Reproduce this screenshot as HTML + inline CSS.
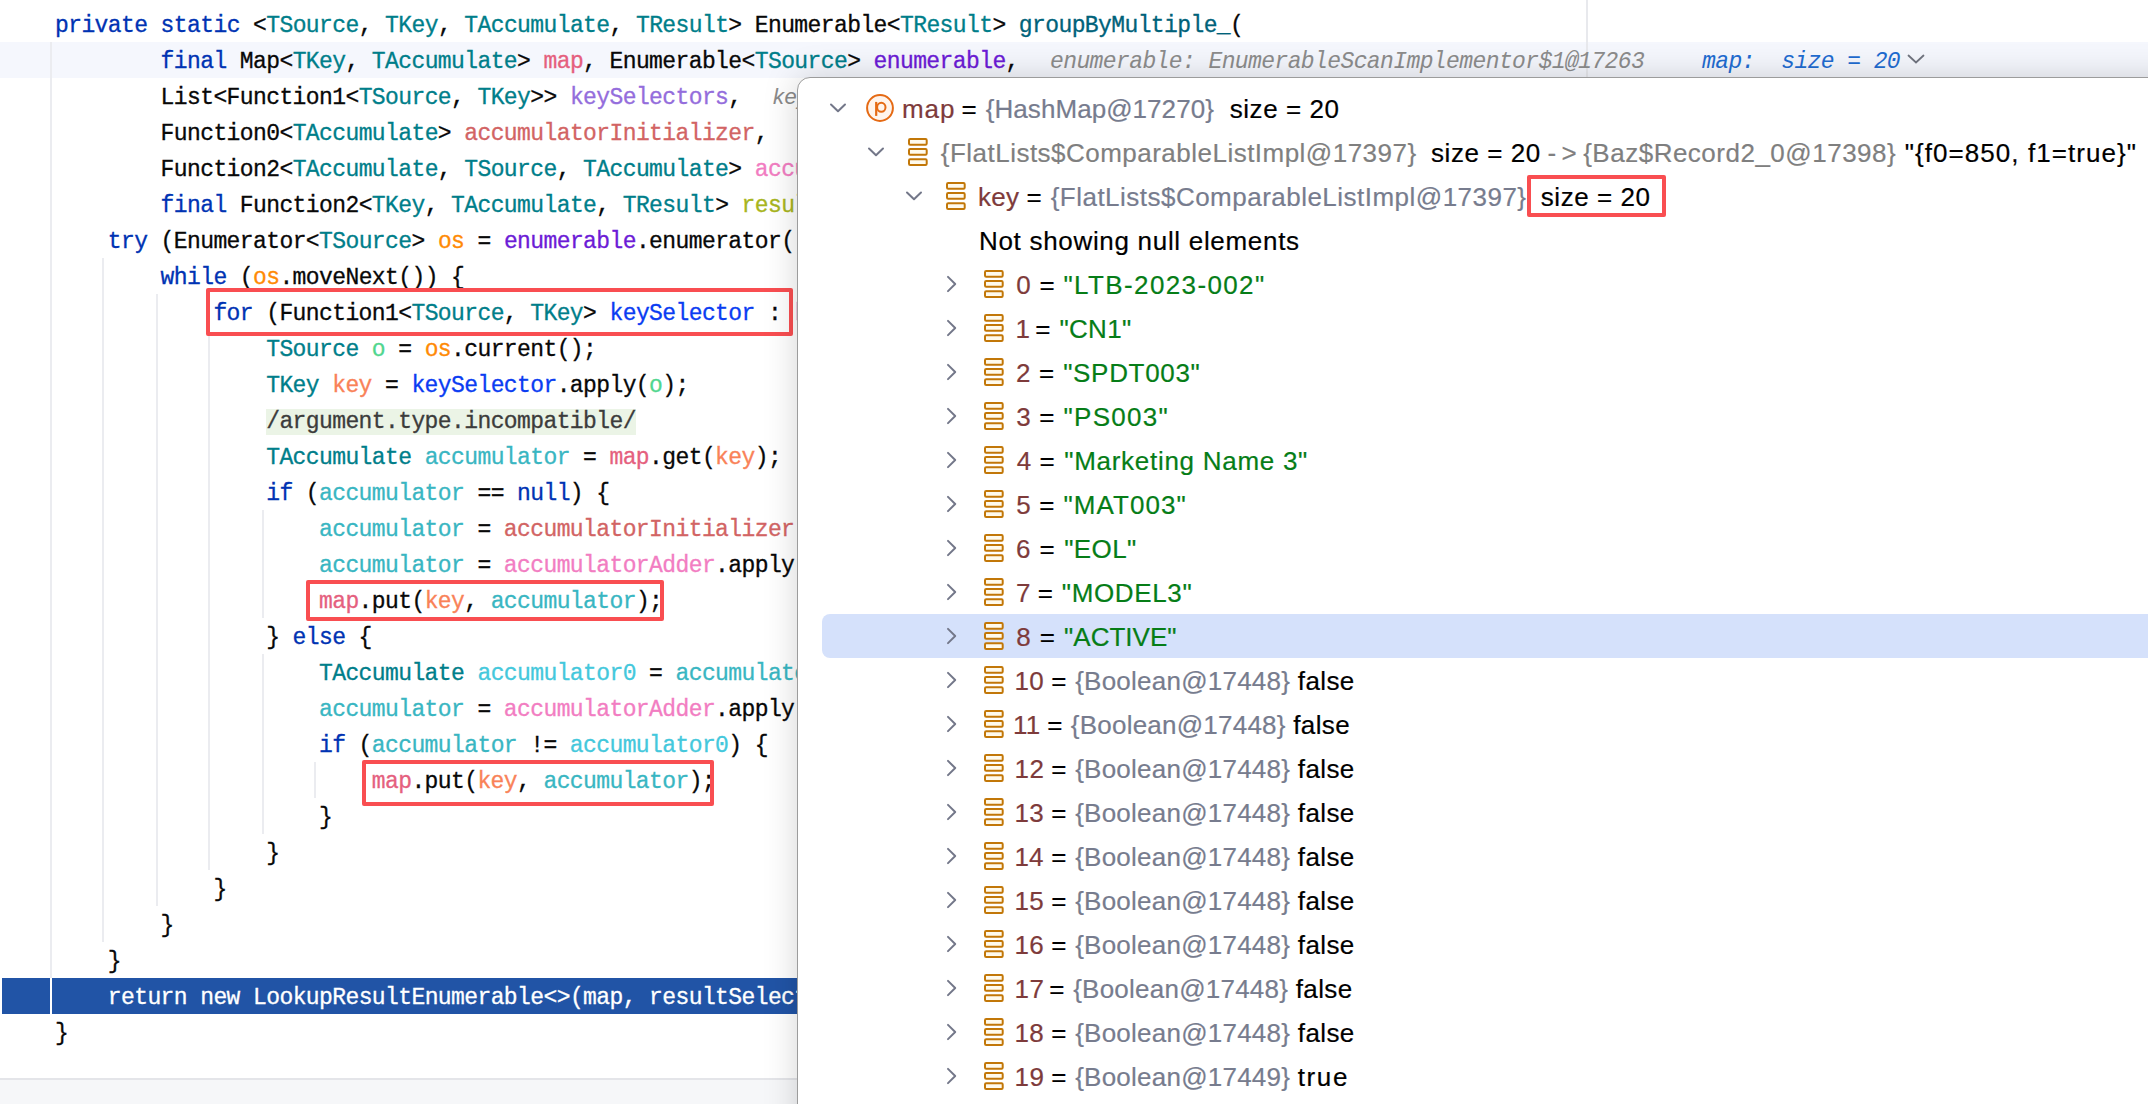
<!DOCTYPE html>
<html><head><meta charset="utf-8"><style>
html,body{margin:0;padding:0;}
body{width:2148px;height:1104px;position:relative;overflow:hidden;background:#fff;}
.ln{position:absolute;white-space:pre;font-family:"Liberation Mono",monospace;font-size:23px;letter-spacing:-0.6px;line-height:36px;color:#080808;-webkit-text-stroke:0.3px currentColor}
.k{color:#0033b3}.t{color:#007e8a}.d{color:#080808}.m{color:#00627a}
.pmap{color:#e5607e}.penum{color:#6c1bd6}.pks{color:#946ddc}.pinit{color:#d26464}.padd{color:#f27dc2}.pres{color:#a8b51e}
.vos{color:#ff8a05}.vo{color:#4fd68e}.vkey{color:#f98258}.vks{color:#0a3cf2}.vacc{color:#39b6c2}.vacc0{color:#44c8dc}
.err{color:#3c3c3c;background:#ebf4e6}
.hint{color:#8c8c8c;font-style:italic}
.sel{color:#fff}
.g{position:absolute;width:2px;background:#ebecf0}
.curline{position:absolute;left:0px;top:42px;width:2148px;height:36px;background:#f5f7fd}
.selbar{position:absolute;left:2px;top:978px;width:2146px;height:36px;background:#2154a6}
.margin{position:absolute;left:1586px;top:0;width:2px;height:78px;background:#e8e9ed}
.status{position:absolute;left:0;top:1078px;width:2148px;height:26px;background:#f6f7f9;border-top:2px solid #e4e5e9}
.rbox{position:absolute;border:4px solid #f94e51;border-radius:2px;box-sizing:border-box}
.dbgv{position:absolute;top:44px;height:36px;white-space:pre;font-family:"Liberation Mono",monospace;font-size:23px;letter-spacing:-0.6px;line-height:36px;font-style:italic}
.popup{position:absolute;left:797px;top:77px;width:1400px;height:1100px;background:#fff;border:1px solid #9c9c9c;border-top-left-radius:13px;box-shadow:0 0 34px rgba(0,0,0,0.17);overflow:hidden}
.rows{position:absolute;left:0;top:0;width:2148px;height:1104px}
.row{position:absolute;left:0;width:2148px;height:44px}
.ab{position:absolute;display:block;line-height:0}
.tx{position:absolute;white-space:pre;font-family:"Liberation Sans",sans-serif;font-size:26px;line-height:44px;color:#000;-webkit-text-stroke:0.2px currentColor}
.chev{fill:none;stroke:#737789;stroke-width:2;stroke-linecap:round;stroke-linejoin:round}
.li{fill:#fffaec;stroke:#c27708;stroke-width:2}
.nm{color:#7e3b3b}.obj{color:#777c8e}.obj2{color:#7f7f7f}.str{color:#067d17}
.hl{position:absolute;left:822px;top:614px;width:1400px;height:44px;background:#d5e1fb;border-radius:8px}
</style></head><body>
<div class="curline"></div>
<div class="margin"></div>
<div class="g" style="left:50px;top:42px;height:936px"></div><div class="g" style="left:102px;top:258px;height:684px"></div><div class="g" style="left:156px;top:294px;height:612px"></div><div class="g" style="left:208px;top:330px;height:540px"></div><div class="g" style="left:262px;top:510px;height:108px"></div><div class="g" style="left:262px;top:654px;height:180px"></div><div class="g" style="left:314px;top:762px;height:36px"></div>
<div class="selbar"></div>
<div style="position:absolute;left:50px;top:978px;width:2px;height:36px;background:#fff"></div>
<div class="ln" style="top:8px;left:55.0px"><span class="k">private static </span><span class="d">&lt;</span><span class="t">TSource</span><span class="d">, </span><span class="t">TKey</span><span class="d">, </span><span class="t">TAccumulate</span><span class="d">, </span><span class="t">TResult</span><span class="d">&gt; Enumerable&lt;</span><span class="t">TResult</span><span class="d">&gt; </span><span class="m">groupByMultiple_</span><span class="d">(</span></div>
<div class="ln" style="top:44px;left:160.6px"><span class="k">final </span><span class="d">Map&lt;</span><span class="t">TKey</span><span class="d">, </span><span class="t">TAccumulate</span><span class="d">&gt; </span><span class="pmap">map</span><span class="d">, Enumerable&lt;</span><span class="t">TSource</span><span class="d">&gt; </span><span class="penum">enumerable</span><span class="d">,</span></div>
<div class="ln" style="top:80px;left:160.6px"><span class="d">List&lt;Function1&lt;</span><span class="t">TSource</span><span class="d">, </span><span class="t">TKey</span><span class="d">&gt;&gt; </span><span class="pks">keySelectors</span><span class="d">,</span></div>
<div class="ln" style="top:116px;left:160.6px"><span class="d">Function0&lt;</span><span class="t">TAccumulate</span><span class="d">&gt; </span><span class="pinit">accumulatorInitializer</span><span class="d">,</span></div>
<div class="ln" style="top:152px;left:160.6px"><span class="d">Function2&lt;</span><span class="t">TAccumulate</span><span class="d">, </span><span class="t">TSource</span><span class="d">, </span><span class="t">TAccumulate</span><span class="d">&gt; </span><span class="padd">accumulatorAdder</span><span class="d">,</span></div>
<div class="ln" style="top:188px;left:160.6px"><span class="k">final </span><span class="d">Function2&lt;</span><span class="t">TKey</span><span class="d">, </span><span class="t">TAccumulate</span><span class="d">, </span><span class="t">TResult</span><span class="d">&gt; </span><span class="pres">resultSelector</span><span class="d">) {</span></div>
<div class="ln" style="top:224px;left:107.8px"><span class="k">try </span><span class="d">(Enumerator&lt;</span><span class="t">TSource</span><span class="d">&gt; </span><span class="vos">os</span><span class="d"> = </span><span class="penum">enumerable</span><span class="d">.enumerator()) {</span></div>
<div class="ln" style="top:260px;left:160.6px"><span class="k">while </span><span class="d">(</span><span class="vos">os</span><span class="d">.moveNext()) {</span></div>
<div class="ln" style="top:296px;left:213.4px"><span class="k">for </span><span class="d">(Function1&lt;</span><span class="t">TSource</span><span class="d">, </span><span class="t">TKey</span><span class="d">&gt; </span><span class="vks">keySelector</span><span class="d"> : </span><span class="pks">keySelectors</span><span class="d">) {</span></div>
<div class="ln" style="top:332px;left:266.2px"><span class="t">TSource </span><span class="vo">o</span><span class="d"> = </span><span class="vos">os</span><span class="d">.current();</span></div>
<div class="ln" style="top:368px;left:266.2px"><span class="t">TKey </span><span class="vkey">key</span><span class="d"> = </span><span class="vks">keySelector</span><span class="d">.apply(</span><span class="vo">o</span><span class="d">);</span></div>
<div class="ln" style="top:404px;left:266.2px"><span class="err">/argument.type.incompatible/</span></div>
<div class="ln" style="top:440px;left:266.2px"><span class="t">TAccumulate </span><span class="vacc">accumulator</span><span class="d"> = </span><span class="pmap">map</span><span class="d">.get(</span><span class="vkey">key</span><span class="d">);</span></div>
<div class="ln" style="top:476px;left:266.2px"><span class="k">if </span><span class="d">(</span><span class="vacc">accumulator</span><span class="d"> == </span><span class="k">null</span><span class="d">) {</span></div>
<div class="ln" style="top:512px;left:319.0px"><span class="vacc">accumulator</span><span class="d"> = </span><span class="pinit">accumulatorInitializer</span><span class="d">.apply();</span></div>
<div class="ln" style="top:548px;left:319.0px"><span class="vacc">accumulator</span><span class="d"> = </span><span class="padd">accumulatorAdder</span><span class="d">.apply(</span><span class="vacc">accumulator</span><span class="d">, </span><span class="vo">o</span><span class="d">);</span></div>
<div class="ln" style="top:584px;left:319.0px"><span class="pmap">map</span><span class="d">.put(</span><span class="vkey">key</span><span class="d">, </span><span class="vacc">accumulator</span><span class="d">);</span></div>
<div class="ln" style="top:620px;left:266.2px"><span class="d">} </span><span class="k">else</span><span class="d"> {</span></div>
<div class="ln" style="top:656px;left:319.0px"><span class="t">TAccumulate </span><span class="vacc0">accumulator0</span><span class="d"> = </span><span class="vacc">accumulator</span><span class="d">;</span></div>
<div class="ln" style="top:692px;left:319.0px"><span class="vacc">accumulator</span><span class="d"> = </span><span class="padd">accumulatorAdder</span><span class="d">.apply(</span><span class="vacc0">accumulator0</span><span class="d">, </span><span class="vo">o</span><span class="d">);</span></div>
<div class="ln" style="top:728px;left:319.0px"><span class="k">if </span><span class="d">(</span><span class="vacc">accumulator</span><span class="d"> != </span><span class="vacc0">accumulator0</span><span class="d">) {</span></div>
<div class="ln" style="top:764px;left:371.8px"><span class="pmap">map</span><span class="d">.put(</span><span class="vkey">key</span><span class="d">, </span><span class="vacc">accumulator</span><span class="d">);</span></div>
<div class="ln" style="top:800px;left:319.0px"><span class="d">}</span></div>
<div class="ln" style="top:836px;left:266.2px"><span class="d">}</span></div>
<div class="ln" style="top:872px;left:213.4px"><span class="d">}</span></div>
<div class="ln" style="top:908px;left:160.6px"><span class="d">}</span></div>
<div class="ln" style="top:944px;left:107.8px"><span class="d">}</span></div>
<div class="ln" style="top:980px;left:107.8px"><span class="sel">return new LookupResultEnumerable&lt;&gt;(map, resultSelector);</span></div>
<div class="ln" style="top:1016px;left:55.0px"><span class="d">}</span></div>
<div class="dbgv" style="left:1050px;color:#8c8c8c">enumerable: EnumerableScanImplementor$1@17263</div>
<div class="dbgv" style="left:1702px;color:#1f6cd1">map:  size = 20</div>
<svg style="position:absolute;left:1907px;top:53px" width="18" height="13" viewBox="0 0 18 13"><path d="M1.5 2.5 L9 9.5 L16.5 2.5" fill="none" stroke="#70747f" stroke-width="1.8" stroke-linecap="round"/></svg>
<div class="status"></div>
<div style="position:absolute;left:773px;top:79px;line-height:36px;font-family:'Liberation Sans',sans-serif;font-style:italic;font-size:22px;letter-spacing:0.4px;color:#8a8a8a;white-space:pre">keySelectors: ArrayList</div>
<div class="rbox" style="left:206px;top:288px;width:587px;height:48px"></div>
<div class="rbox" style="left:306px;top:580px;width:358px;height:41px"></div>
<div class="rbox" style="left:362px;top:760px;width:352px;height:46px"></div>
<div class="popup"></div>
<div class="hl"></div>
<svg style="position:absolute;left:0;top:0" width="2148" height="1104"><path d="M831.0 104.5 L838.0 111.2 L845.0 104.5" class="chev"/><circle cx="880.0" cy="108.0" r="12.9" fill="#fff4ec" stroke="#e56a14" stroke-width="2"/><path d="M876.2 101.9 V115.9" stroke="#e56a14" stroke-width="2.2" fill="none"/><ellipse cx="881.30" cy="107.35" rx="4.2" ry="4.5" stroke="#e56a14" stroke-width="2" fill="none"/><path d="M869.0 148.5 L876.0 155.2 L883.0 148.5" class="chev"/><rect x="909.0" y="139.0" width="17.7" height="5.7" rx="1.2" class="li"/><rect x="909.0" y="149.1" width="17.7" height="5.7" rx="1.2" class="li"/><rect x="909.0" y="159.2" width="17.7" height="5.7" rx="1.2" class="li"/><path d="M907.0 192.5 L914.0 199.2 L921.0 192.5" class="chev"/><rect x="947.0" y="183.0" width="17.7" height="5.7" rx="1.2" class="li"/><rect x="947.0" y="193.1" width="17.7" height="5.7" rx="1.2" class="li"/><rect x="947.0" y="203.2" width="17.7" height="5.7" rx="1.2" class="li"/><path d="M948.0 276.9 L955.2 284.0 L948.0 291.1" class="chev"/><rect x="985.0" y="271.0" width="17.7" height="5.7" rx="1.2" class="li"/><rect x="985.0" y="281.1" width="17.7" height="5.7" rx="1.2" class="li"/><rect x="985.0" y="291.2" width="17.7" height="5.7" rx="1.2" class="li"/><path d="M948.0 320.9 L955.2 328.0 L948.0 335.1" class="chev"/><rect x="985.0" y="315.0" width="17.7" height="5.7" rx="1.2" class="li"/><rect x="985.0" y="325.1" width="17.7" height="5.7" rx="1.2" class="li"/><rect x="985.0" y="335.2" width="17.7" height="5.7" rx="1.2" class="li"/><path d="M948.0 364.9 L955.2 372.0 L948.0 379.1" class="chev"/><rect x="985.0" y="359.0" width="17.7" height="5.7" rx="1.2" class="li"/><rect x="985.0" y="369.1" width="17.7" height="5.7" rx="1.2" class="li"/><rect x="985.0" y="379.2" width="17.7" height="5.7" rx="1.2" class="li"/><path d="M948.0 408.9 L955.2 416.0 L948.0 423.1" class="chev"/><rect x="985.0" y="403.0" width="17.7" height="5.7" rx="1.2" class="li"/><rect x="985.0" y="413.1" width="17.7" height="5.7" rx="1.2" class="li"/><rect x="985.0" y="423.2" width="17.7" height="5.7" rx="1.2" class="li"/><path d="M948.0 452.9 L955.2 460.0 L948.0 467.1" class="chev"/><rect x="985.0" y="447.0" width="17.7" height="5.7" rx="1.2" class="li"/><rect x="985.0" y="457.1" width="17.7" height="5.7" rx="1.2" class="li"/><rect x="985.0" y="467.2" width="17.7" height="5.7" rx="1.2" class="li"/><path d="M948.0 496.9 L955.2 504.0 L948.0 511.1" class="chev"/><rect x="985.0" y="491.0" width="17.7" height="5.7" rx="1.2" class="li"/><rect x="985.0" y="501.1" width="17.7" height="5.7" rx="1.2" class="li"/><rect x="985.0" y="511.2" width="17.7" height="5.7" rx="1.2" class="li"/><path d="M948.0 540.9 L955.2 548.0 L948.0 555.1" class="chev"/><rect x="985.0" y="535.0" width="17.7" height="5.7" rx="1.2" class="li"/><rect x="985.0" y="545.1" width="17.7" height="5.7" rx="1.2" class="li"/><rect x="985.0" y="555.2" width="17.7" height="5.7" rx="1.2" class="li"/><path d="M948.0 584.9 L955.2 592.0 L948.0 599.1" class="chev"/><rect x="985.0" y="579.0" width="17.7" height="5.7" rx="1.2" class="li"/><rect x="985.0" y="589.1" width="17.7" height="5.7" rx="1.2" class="li"/><rect x="985.0" y="599.2" width="17.7" height="5.7" rx="1.2" class="li"/><path d="M948.0 628.9 L955.2 636.0 L948.0 643.1" class="chev"/><rect x="985.0" y="623.0" width="17.7" height="5.7" rx="1.2" class="li"/><rect x="985.0" y="633.1" width="17.7" height="5.7" rx="1.2" class="li"/><rect x="985.0" y="643.2" width="17.7" height="5.7" rx="1.2" class="li"/><path d="M948.0 672.9 L955.2 680.0 L948.0 687.1" class="chev"/><rect x="985.0" y="667.0" width="17.7" height="5.7" rx="1.2" class="li"/><rect x="985.0" y="677.1" width="17.7" height="5.7" rx="1.2" class="li"/><rect x="985.0" y="687.2" width="17.7" height="5.7" rx="1.2" class="li"/><path d="M948.0 716.9 L955.2 724.0 L948.0 731.1" class="chev"/><rect x="985.0" y="711.0" width="17.7" height="5.7" rx="1.2" class="li"/><rect x="985.0" y="721.1" width="17.7" height="5.7" rx="1.2" class="li"/><rect x="985.0" y="731.2" width="17.7" height="5.7" rx="1.2" class="li"/><path d="M948.0 760.9 L955.2 768.0 L948.0 775.1" class="chev"/><rect x="985.0" y="755.0" width="17.7" height="5.7" rx="1.2" class="li"/><rect x="985.0" y="765.1" width="17.7" height="5.7" rx="1.2" class="li"/><rect x="985.0" y="775.2" width="17.7" height="5.7" rx="1.2" class="li"/><path d="M948.0 804.9 L955.2 812.0 L948.0 819.1" class="chev"/><rect x="985.0" y="799.0" width="17.7" height="5.7" rx="1.2" class="li"/><rect x="985.0" y="809.1" width="17.7" height="5.7" rx="1.2" class="li"/><rect x="985.0" y="819.2" width="17.7" height="5.7" rx="1.2" class="li"/><path d="M948.0 848.9 L955.2 856.0 L948.0 863.1" class="chev"/><rect x="985.0" y="843.0" width="17.7" height="5.7" rx="1.2" class="li"/><rect x="985.0" y="853.1" width="17.7" height="5.7" rx="1.2" class="li"/><rect x="985.0" y="863.2" width="17.7" height="5.7" rx="1.2" class="li"/><path d="M948.0 892.9 L955.2 900.0 L948.0 907.1" class="chev"/><rect x="985.0" y="887.0" width="17.7" height="5.7" rx="1.2" class="li"/><rect x="985.0" y="897.1" width="17.7" height="5.7" rx="1.2" class="li"/><rect x="985.0" y="907.2" width="17.7" height="5.7" rx="1.2" class="li"/><path d="M948.0 936.9 L955.2 944.0 L948.0 951.1" class="chev"/><rect x="985.0" y="931.0" width="17.7" height="5.7" rx="1.2" class="li"/><rect x="985.0" y="941.1" width="17.7" height="5.7" rx="1.2" class="li"/><rect x="985.0" y="951.2" width="17.7" height="5.7" rx="1.2" class="li"/><path d="M948.0 980.9 L955.2 988.0 L948.0 995.1" class="chev"/><rect x="985.0" y="975.0" width="17.7" height="5.7" rx="1.2" class="li"/><rect x="985.0" y="985.1" width="17.7" height="5.7" rx="1.2" class="li"/><rect x="985.0" y="995.2" width="17.7" height="5.7" rx="1.2" class="li"/><path d="M948.0 1024.9 L955.2 1032.0 L948.0 1039.1" class="chev"/><rect x="985.0" y="1019.0" width="17.7" height="5.7" rx="1.2" class="li"/><rect x="985.0" y="1029.1" width="17.7" height="5.7" rx="1.2" class="li"/><rect x="985.0" y="1039.2" width="17.7" height="5.7" rx="1.2" class="li"/><path d="M948.0 1068.9 L955.2 1076.0 L948.0 1083.1" class="chev"/><rect x="985.0" y="1063.0" width="17.7" height="5.7" rx="1.2" class="li"/><rect x="985.0" y="1073.1" width="17.7" height="5.7" rx="1.2" class="li"/><rect x="985.0" y="1083.2" width="17.7" height="5.7" rx="1.2" class="li"/></svg>
<span class="tx nm" style="left:902.0px;top:87.3px;letter-spacing:0.88px">map</span>
<span class="tx " style="left:961.6px;top:87.3px;letter-spacing:0.00px">=</span>
<span class="tx obj" style="left:985.8px;top:87.3px;letter-spacing:0.05px">{HashMap@17270}</span>
<span class="tx " style="left:1229.7px;top:87.3px;letter-spacing:0.56px">size = 20</span>
<span class="tx obj2" style="left:940.8px;top:131.3px;letter-spacing:0.48px">{FlatLists$ComparableListImpl@17397}</span>
<span class="tx " style="left:1431.0px;top:131.3px;letter-spacing:0.55px">size = 20</span>
<span class="tx obj2" style="left:1547.5px;top:131.3px;letter-spacing:5.25px">-&gt;</span>
<span class="tx obj2" style="left:1583.2px;top:131.3px;letter-spacing:0.50px">{Baz$Record2_0@17398}</span>
<span class="tx " style="left:1904.7px;top:131.3px;letter-spacing:1.06px">"{f0=850, f1=true}"</span>
<span class="tx nm" style="left:977.9px;top:175.3px;letter-spacing:0.32px">key</span>
<span class="tx " style="left:1026.5px;top:175.3px;letter-spacing:0.00px">=</span>
<span class="tx obj" style="left:1050.7px;top:175.3px;letter-spacing:0.48px">{FlatLists$ComparableListImpl@17397}</span>
<span class="tx " style="left:1540.8px;top:175.3px;letter-spacing:0.56px">size = 20</span>
<span class="tx " style="left:979.0px;top:219.3px;letter-spacing:0.69px">Not showing null elements</span>
<span class="tx nm" style="left:1016.2px;top:263.3px;letter-spacing:0.00px">0</span>
<span class="tx " style="left:1039.5px;top:263.3px;letter-spacing:0.00px">=</span>
<span class="tx str" style="left:1063.5px;top:263.3px;letter-spacing:1.38px">"LTB-2023-002"</span>
<span class="tx nm" style="left:1015.5px;top:307.3px;letter-spacing:0.00px">1</span>
<span class="tx " style="left:1035.2px;top:307.3px;letter-spacing:0.00px">=</span>
<span class="tx str" style="left:1059.4px;top:307.3px;letter-spacing:0.32px">"CN1"</span>
<span class="tx nm" style="left:1016.0px;top:351.3px;letter-spacing:0.00px">2</span>
<span class="tx " style="left:1039.0px;top:351.3px;letter-spacing:0.00px">=</span>
<span class="tx str" style="left:1063.2px;top:351.3px;letter-spacing:0.68px">"SPDT003"</span>
<span class="tx nm" style="left:1016.2px;top:395.3px;letter-spacing:0.00px">3</span>
<span class="tx " style="left:1039.2px;top:395.3px;letter-spacing:0.00px">=</span>
<span class="tx str" style="left:1063.5px;top:395.3px;letter-spacing:1.28px">"PS003"</span>
<span class="tx nm" style="left:1016.7px;top:439.3px;letter-spacing:0.00px">4</span>
<span class="tx " style="left:1039.5px;top:439.3px;letter-spacing:0.00px">=</span>
<span class="tx str" style="left:1064.2px;top:439.3px;letter-spacing:0.72px">"Marketing Name 3"</span>
<span class="tx nm" style="left:1016.2px;top:483.3px;letter-spacing:0.00px">5</span>
<span class="tx " style="left:1039.2px;top:483.3px;letter-spacing:0.00px">=</span>
<span class="tx str" style="left:1063.4px;top:483.3px;letter-spacing:1.08px">"MAT003"</span>
<span class="tx nm" style="left:1016.0px;top:527.3px;letter-spacing:0.00px">6</span>
<span class="tx " style="left:1039.5px;top:527.3px;letter-spacing:0.00px">=</span>
<span class="tx str" style="left:1064.2px;top:527.3px;letter-spacing:0.40px">"EOL"</span>
<span class="tx nm" style="left:1016.0px;top:571.3px;letter-spacing:0.00px">7</span>
<span class="tx " style="left:1037.8px;top:571.3px;letter-spacing:0.00px">=</span>
<span class="tx str" style="left:1061.8px;top:571.3px;letter-spacing:0.64px">"MODEL3"</span>
<span class="tx nm" style="left:1016.2px;top:615.3px;letter-spacing:0.00px">8</span>
<span class="tx " style="left:1039.8px;top:615.3px;letter-spacing:0.00px">=</span>
<span class="tx str" style="left:1064.1px;top:615.3px;letter-spacing:0.01px">"ACTIVE"</span>
<span class="tx nm" style="left:1014.4px;top:659.3px;letter-spacing:0.30px">10</span>
<span class="tx " style="left:1051.2px;top:659.3px;letter-spacing:0.00px">=</span>
<span class="tx obj" style="left:1075.2px;top:659.3px;letter-spacing:0.23px">{Boolean@17448}</span>
<span class="tx " style="left:1297.8px;top:659.3px;letter-spacing:0.40px">false</span>
<span class="tx nm" style="left:1013.0px;top:703.3px;letter-spacing:0.25px">11</span>
<span class="tx " style="left:1047.3px;top:703.3px;letter-spacing:0.00px">=</span>
<span class="tx obj" style="left:1070.8px;top:703.3px;letter-spacing:0.23px">{Boolean@17448}</span>
<span class="tx " style="left:1293.2px;top:703.3px;letter-spacing:0.40px">false</span>
<span class="tx nm" style="left:1014.4px;top:747.3px;letter-spacing:0.55px">12</span>
<span class="tx " style="left:1051.2px;top:747.3px;letter-spacing:0.00px">=</span>
<span class="tx obj" style="left:1075.2px;top:747.3px;letter-spacing:0.23px">{Boolean@17448}</span>
<span class="tx " style="left:1297.8px;top:747.3px;letter-spacing:0.40px">false</span>
<span class="tx nm" style="left:1014.4px;top:791.3px;letter-spacing:0.30px">13</span>
<span class="tx " style="left:1051.2px;top:791.3px;letter-spacing:0.00px">=</span>
<span class="tx obj" style="left:1075.2px;top:791.3px;letter-spacing:0.23px">{Boolean@17448}</span>
<span class="tx " style="left:1297.8px;top:791.3px;letter-spacing:0.40px">false</span>
<span class="tx nm" style="left:1014.4px;top:835.3px;letter-spacing:0.05px">14</span>
<span class="tx " style="left:1051.2px;top:835.3px;letter-spacing:0.00px">=</span>
<span class="tx obj" style="left:1075.2px;top:835.3px;letter-spacing:0.23px">{Boolean@17448}</span>
<span class="tx " style="left:1297.8px;top:835.3px;letter-spacing:0.40px">false</span>
<span class="tx nm" style="left:1014.4px;top:879.3px;letter-spacing:0.30px">15</span>
<span class="tx " style="left:1051.2px;top:879.3px;letter-spacing:0.00px">=</span>
<span class="tx obj" style="left:1075.2px;top:879.3px;letter-spacing:0.23px">{Boolean@17448}</span>
<span class="tx " style="left:1297.8px;top:879.3px;letter-spacing:0.40px">false</span>
<span class="tx nm" style="left:1014.4px;top:923.3px;letter-spacing:0.30px">16</span>
<span class="tx " style="left:1051.2px;top:923.3px;letter-spacing:0.00px">=</span>
<span class="tx obj" style="left:1075.2px;top:923.3px;letter-spacing:0.23px">{Boolean@17448}</span>
<span class="tx " style="left:1297.8px;top:923.3px;letter-spacing:0.40px">false</span>
<span class="tx nm" style="left:1014.4px;top:967.3px;letter-spacing:0.55px">17</span>
<span class="tx " style="left:1049.3px;top:967.3px;letter-spacing:0.00px">=</span>
<span class="tx obj" style="left:1073.2px;top:967.3px;letter-spacing:0.23px">{Boolean@17448}</span>
<span class="tx " style="left:1295.7px;top:967.3px;letter-spacing:0.40px">false</span>
<span class="tx nm" style="left:1014.4px;top:1011.3px;letter-spacing:0.30px">18</span>
<span class="tx " style="left:1051.2px;top:1011.3px;letter-spacing:0.00px">=</span>
<span class="tx obj" style="left:1075.2px;top:1011.3px;letter-spacing:0.23px">{Boolean@17448}</span>
<span class="tx " style="left:1297.8px;top:1011.3px;letter-spacing:0.40px">false</span>
<span class="tx nm" style="left:1014.4px;top:1055.3px;letter-spacing:0.55px">19</span>
<span class="tx " style="left:1051.2px;top:1055.3px;letter-spacing:0.00px">=</span>
<span class="tx obj" style="left:1075.2px;top:1055.3px;letter-spacing:0.23px">{Boolean@17449}</span>
<span class="tx " style="left:1297.8px;top:1055.3px;letter-spacing:1.58px">true</span>

<div class="rbox" style="left:1527px;top:175px;width:139px;height:42px"></div>
</body></html>
